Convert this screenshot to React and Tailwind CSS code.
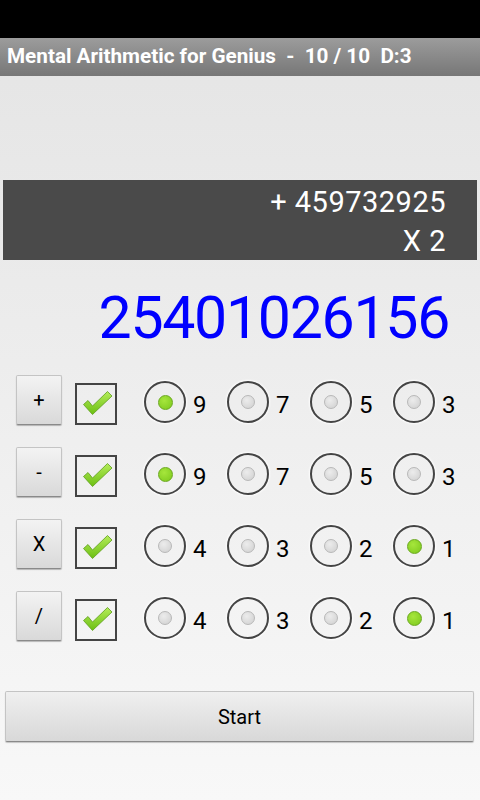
import React from "react";

const font = { fontFamily: "Roboto, 'Noto Sans', sans-serif" };

function Check() {
  return (
    <svg width="42" height="42" viewBox="0 0 42 42" className="absolute left-0 top-0">
      <defs>
        <linearGradient id="cg" x1="0" y1="0" x2="0" y2="1">
          <stop offset="0" stopColor="#b4ec5a" />
          <stop offset="1" stopColor="#6cbf12" />
        </linearGradient>
      </defs>
      <path
        d="M8.5 21.5 L13 17.5 L17.5 23 L32.5 8.5 L37 13 L17.5 31.5 Z"
        fill="url(#cg)"
        stroke="#5e9e1c"
        strokeWidth="0.8"
        strokeLinejoin="round"
      />
    </svg>
  );
}

function Radio({ on, label }) {
  return (
    <div className="flex w-[83px] items-center">
      <div className="flex h-[42px] w-[42px] shrink-0 items-center justify-center rounded-full border-2 border-[#444] shadow-[0_0_2px_1px_rgba(255,255,255,0.9)]">
        {on ? (
          <div className="h-[15px] w-[15px] rounded-full border border-[#6aa81e] bg-[radial-gradient(circle_at_40%_35%,#a6e63c,#7cc81c)]" />
        ) : (
          <div className="h-[14px] w-[14px] rounded-full border border-[#b8b8b8] bg-[radial-gradient(circle_at_40%_35%,#ececec,#cfcfcf)]" />
        )}
      </div>
      <span className="ml-[7px] pt-[5px] text-[24px] leading-none text-black">{label}</span>
    </div>
  );
}

function Row({ op, opts, sel }) {
  return (
    <div className="flex h-[72px] items-start pl-[16px]">
      <div className="mt-[9px] flex h-[50px] w-[46px] items-center justify-center rounded-[2px] border border-[#c4c4c4] border-b-[#8a8a8a] bg-linear-to-b from-[#f3f3f3] to-[#d9d9d9] text-[20px] text-black shadow-[0_1px_1px_rgba(0,0,0,0.25)]">
        {op}
      </div>
      <div className="relative ml-[13px] mt-[17px] h-[42px] w-[42px] border-2 border-[#444]">
        <div className="absolute -left-[2px] -top-[2px]">
          <Check />
        </div>
      </div>
      <div className="ml-[27px] mt-[15px] flex">
        {opts.map((o, i) => (
          <Radio key={i} on={i === sel} label={o} />
        ))}
      </div>
    </div>
  );
}

export default function App() {
  return (
    <div className="flex h-[800px] w-[480px] flex-col overflow-hidden bg-linear-to-b from-[#e4e4e4] to-[#f8f8f8]" style={font}>
      <div className="h-[38px] shrink-0 bg-black" />
      <div className="flex h-[38px] shrink-0 items-center bg-linear-to-b from-[#9c9c9c] to-[#777] pl-[7px]">
        <span className="whitespace-pre text-[20.7px] font-bold text-white">
          Mental Arithmetic for Genius  -  10 / 10  D:3
        </span>
      </div>
      <div className="h-[104px] shrink-0" />
      <div className="mx-[3px] flex h-[80px] shrink-0 flex-col items-end justify-center bg-[#4a4a4a] pr-[31px] pt-[3px] text-[29px] leading-[39px] tracking-[0.5px] text-white">
        <div>+ 459732925</div>
        <div>X 2</div>
      </div>
      <div className="flex h-[106px] shrink-0 items-center justify-end pr-[31px] pt-[9px] text-[59px] leading-none tracking-[-1.3px] text-[#0000ff]">
        25401026156
      </div>
      <Row op="+" opts={["9", "7", "5", "3"]} sel={0} />
      <Row op="-" opts={["9", "7", "5", "3"]} sel={0} />
      <Row op="X" opts={["4", "3", "2", "1"]} sel={3} />
      <Row op="/" opts={["4", "3", "2", "1"]} sel={3} />
      <div className="ml-[5px] mr-[6px] mt-[37px] flex h-[51px] items-center justify-center rounded-[2px] border border-[#c4c4c4] border-b-[#8a8a8a] bg-linear-to-b from-[#f0f0f0] to-[#d8d8d8] text-[20px] text-black shadow-[0_1px_1px_rgba(0,0,0,0.2)]">
        Start
      </div>
    </div>
  );
}
